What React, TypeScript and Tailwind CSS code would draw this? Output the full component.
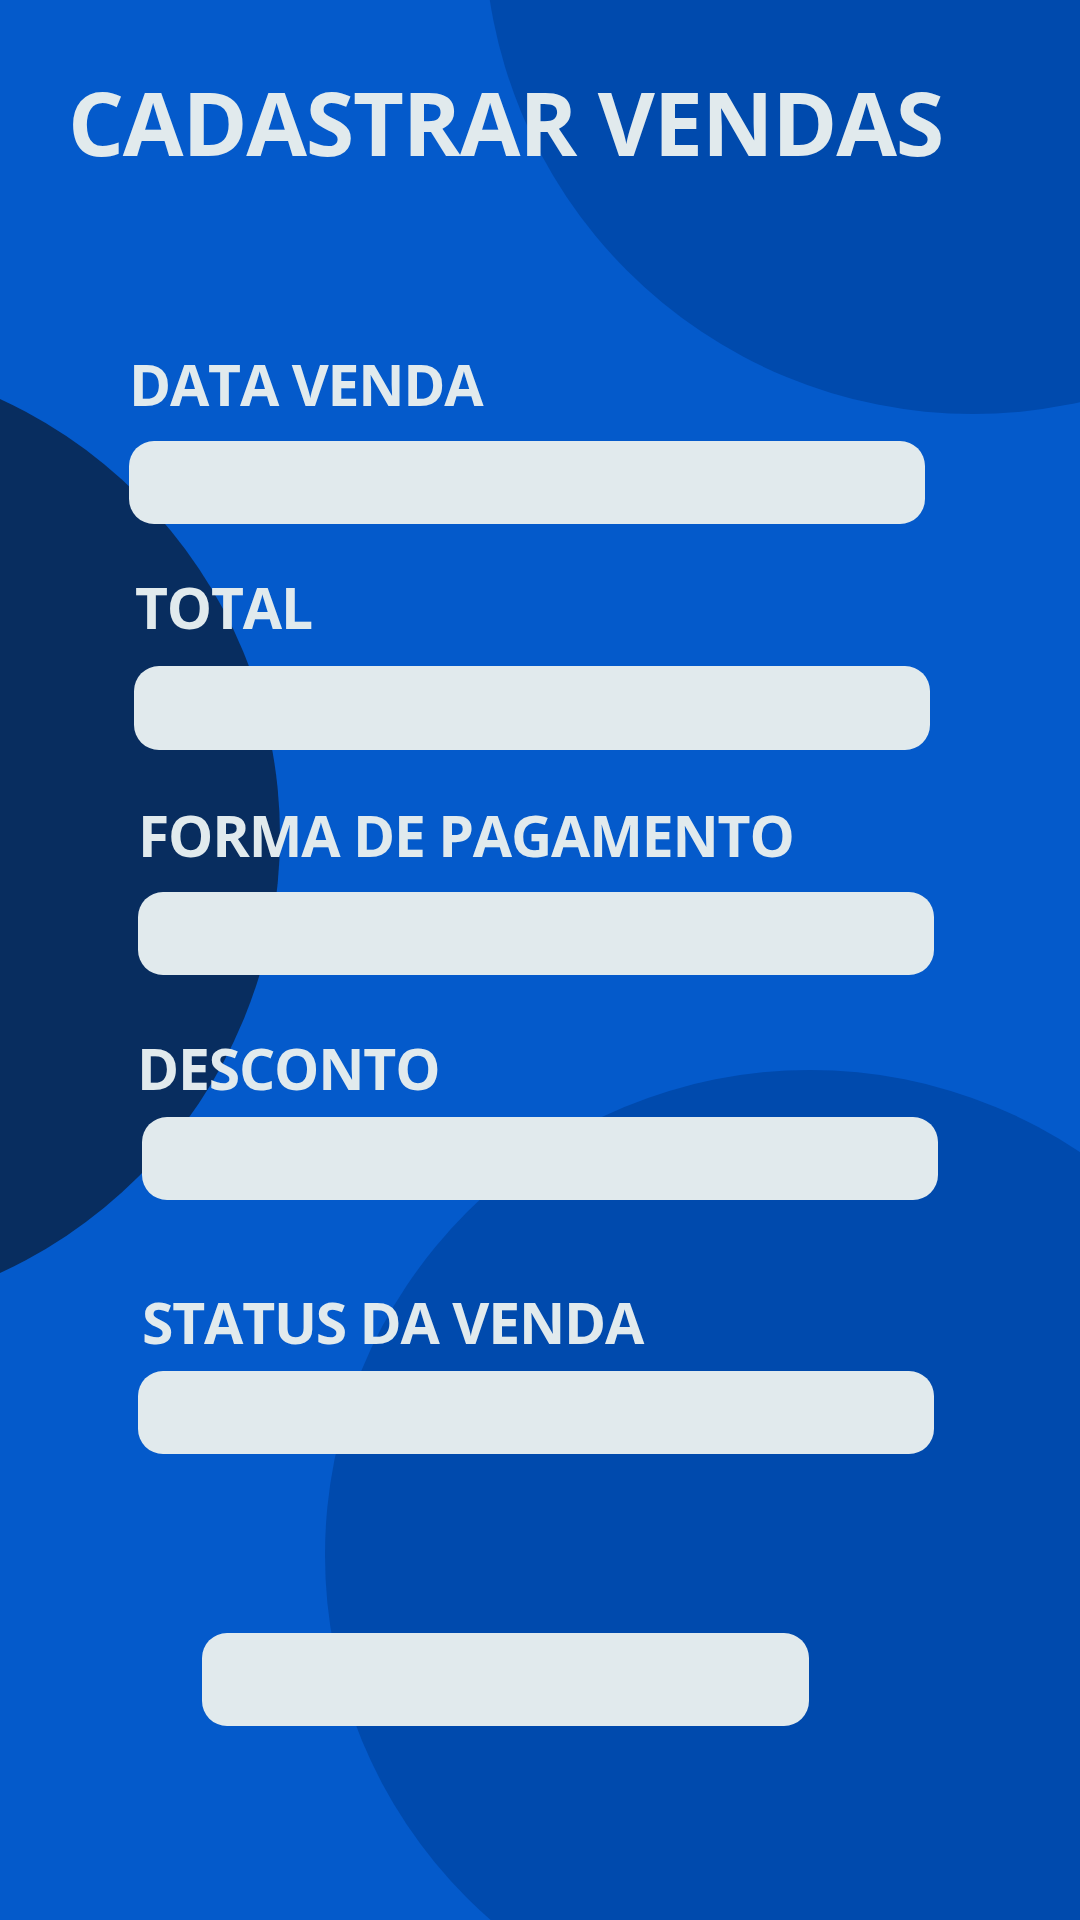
function Field({ label, rowClass, labelClass, inputClass }: { label: string; rowClass: string; labelClass: string; inputClass: string }) {
  return (
    <div className={`flex flex-col ${rowClass}`}>
      <label className={`text-[57px] leading-none font-bold tracking-[-1.2px] text-[#e1eaed] whitespace-nowrap ${labelClass}`}>{label}</label>
      <input type="text" className={`w-[796px] h-[83px] rounded-[25px] bg-[#e1eaed] outline-none ${inputClass}`} />
    </div>
  )
}

function App() {
  return (
    <div className="relative w-[1080px] h-[1920px] overflow-hidden bg-[#045acb] font-['Open_Sans',sans-serif]">
      {/* decorative circles */}
      <div className="absolute left-[484px] top-[-564px] w-[978px] h-[978px] rounded-full bg-[#004aad]" />
      <div className="absolute left-[-682px] top-[355px] w-[962px] h-[962px] rounded-full bg-[#082d5f]" />
      <div className="absolute left-[325px] top-[1070px] w-[970px] h-[970px] rounded-full bg-[#004aad]" />

      <div className="relative flex flex-col pt-[78px]">
        <h1 className="ml-[68px] text-[88px] leading-none font-bold tracking-[-1.2px] text-[#e1eaed] whitespace-nowrap">CADASTRAR VENDAS</h1>

        <Field label="DATA VENDA" rowClass="ml-[129px] mt-[190px]" labelClass="ml-[0px]" inputClass="mt-[28px]" />
        <Field label="TOTAL" rowClass="ml-[134px] mt-[55px]" labelClass="ml-[1px]" inputClass="mt-[30px] h-[84px]" />
        <Field label="FORMA DE PAGAMENTO" rowClass="ml-[138px] mt-[57px]" labelClass="ml-[0px]" inputClass="mt-[28px] h-[82px]" />
        <Field label="DESCONTO" rowClass="ml-[142px] mt-[65px]" labelClass="ml-[-5px]" inputClass="mt-[20px]" />
        <Field label="STATUS DA VENDA" rowClass="ml-[138px] mt-[94px]" labelClass="ml-[4px]" inputClass="mt-[20px]" />

        <button className="ml-[202px] mt-[179px] w-[607px] h-[93px] rounded-[25px] bg-[#e1eaed]" />
      </div>
    </div>
  )
}

export default App
